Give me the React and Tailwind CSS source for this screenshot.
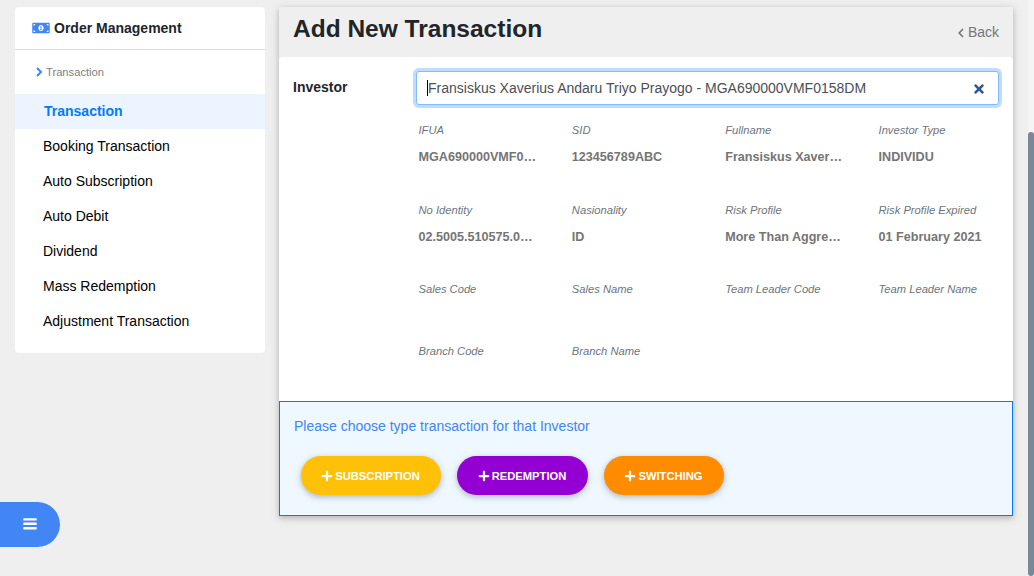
import React from "react";
import { FaMoneyBillAlt, FaTimes, FaPlus } from "react-icons/fa";

const menu = [
  "Booking Transaction",
  "Auto Subscription",
  "Auto Debit",
  "Dividend",
  "Mass Redemption",
  "Adjustment Transaction",
];

const details = [
  ["IFUA", "MGA690000VMF0…"],
  ["SID", "123456789ABC"],
  ["Fullname", "Fransiskus Xaver…"],
  ["Investor Type", "INDIVIDU"],
  ["No Identity", "02.5005.510575.0…"],
  ["Nasionality", "ID"],
  ["Risk Profile", "More Than Aggre…"],
  ["Risk Profile Expired", "01 February 2021"],
  ["Sales Code", ""],
  ["Sales Name", ""],
  ["Team Leader Code", ""],
  ["Team Leader Name", ""],
  ["Branch Code", ""],
  ["Branch Name", ""],
];

const actions = [
  { label: "SUBSCRIPTION", style: "w-[140px] bg-[#ffc107]" },
  { label: "REDEMPTION", style: "w-[131px] bg-[#9400d3]" },
  { label: "SWITCHING", style: "w-[120px] bg-[#ff8c00]" },
];

function ChevronRight() {
  return (
    <svg className="h-[10px] w-[7px] text-[#4285f4]" viewBox="0 0 7 10" fill="none" stroke="currentColor" strokeWidth="2">
      <path d="M1 1l4 4-4 4" />
    </svg>
  );
}

function ChevronLeft() {
  return (
    <svg className="mt-px h-[10px] w-[6px]" viewBox="0 0 6 10" fill="none" stroke="currentColor" strokeWidth="1.6">
      <path d="M5 1L1.2 5 5 9" />
    </svg>
  );
}

function Bars() {
  return (
    <svg className="h-[12px] w-[14px]" viewBox="0 0 14 12" fill="currentColor">
      <rect x="0.3" y="0.2" width="13.4" height="2.4" rx="0.5" />
      <rect x="0.3" y="4.6" width="13.4" height="2.4" rx="0.5" />
      <rect x="0.3" y="9" width="13.4" height="2.4" rx="0.5" />
    </svg>
  );
}

function Sidebar() {
  return (
    <aside className="h-[346px] w-[250px] shrink-0 overflow-hidden rounded bg-white">
      <div className="flex h-[43px] items-center gap-1 border-b border-[#dfdfdf] pl-[17px] font-bold text-[#212529]">
        <FaMoneyBillAlt className="h-[14px] w-[18px] text-[#4285f4]" />
        <span>Order Management</span>
      </div>
      <div className="flex h-11 items-center gap-[3px] pl-[21px] text-[11.2px] text-[#808080]">
        <ChevronRight />
        <span>Transaction</span>
      </div>
      <nav>
        <a className="flex h-[35px] items-center bg-[#ecf5ff] pl-[29px] font-bold text-[#007bff]">Transaction</a>
        {menu.map((m) => (
          <a key={m} className="flex h-[35px] items-center pl-7 text-black">{m}</a>
        ))}
      </nav>
    </aside>
  );
}

function InvestorForm() {
  return (
    <section className="flex h-[344px] rounded-t bg-white pl-3.5 pt-3.5">
      <label className="w-[123px] shrink-0 pt-1.5 font-bold text-[#212529]">Investor</label>
      <div>
        <div className="flex h-[34px] w-[583px] items-center justify-between rounded-[3px] border border-[#80bdff] bg-white pl-2.5 pr-3 text-[#495057] ring-3 ring-[#bfdeff]">
          <div className="flex items-center">
            <span className="h-4 w-px bg-black" />
            <span>Fransiskus Xaverius Andaru Triyo Prayogo - MGA690000VMF0158DM</span>
          </div>
          <FaTimes className="mt-px size-[14px] text-[#2f5597]" />
        </div>
        <dl className="ml-[2.5px] mt-[15px] grid w-[613.4px] grid-cols-4 grid-rows-[80px_79px_62px_40px]">
          {details.map(([label, value]) => (
            <div key={label}>
              <dt className="text-[11.2px] italic leading-5 text-[#6c757d]">{label}</dt>
              <dd className="mt-[7px] text-[12.6px] font-bold leading-5 text-[#757575]">{value}</dd>
            </div>
          ))}
        </dl>
      </div>
    </section>
  );
}

export default function App() {
  return (
    <div className="relative flex h-[576px] w-[1034px] overflow-hidden bg-[#efefef] font-['Liberation_Sans',Arial,sans-serif] text-[14px] leading-[21px]">
      <div className="flex gap-3.5 pl-[15px] pt-[7px]">
        <Sidebar />
        <main className="h-[509px] w-[734px] shadow-[0_2px_5px_rgba(0,0,0,0.16),0_2px_10px_rgba(0,0,0,0.12)]">
          <header className="flex h-[50px] items-center justify-between bg-[#efefef] px-3.5">
            <h1 className="-mt-[7px] text-[24.5px] font-bold leading-[30px] text-[#212529]">Add New Transaction</h1>
            <a className="flex items-center gap-1 text-[#757575]">
              <ChevronLeft />
              Back
            </a>
          </header>
          <InvestorForm />
          <section className="h-[115px] border border-[#007bff] bg-[#eff7ff] px-3.5 pt-3.5">
            <p className="text-[#4285f4]">Please choose type transaction for that Investor</p>
            <div className="ml-[7px] mt-[19px] flex gap-4">
              {actions.map(({ label, style }) => (
                <button
                  key={label}
                  className={`flex h-[39px] items-center justify-center gap-0.5 rounded-full pr-px pt-px text-[11.2px] font-bold text-white shadow-[0_2px_5px_rgba(0,0,0,0.16),0_2px_10px_rgba(0,0,0,0.12)] ${style}`}
                >
                  <FaPlus className="size-[12px]" />
                  {label}
                </button>
              ))}
            </div>
          </section>
        </main>
      </div>
      <button className="absolute left-0 top-[502px] flex h-[45px] w-[60px] items-center justify-center rounded-r-full bg-[#4285f4] pb-px text-white">
        <Bars />
      </button>
      <div className="absolute right-0 top-0 h-full w-1.5 bg-[#f5f5f5] pt-[132px]">
        <div className="h-full max-h-[444px] rounded-[3px] bg-[#778899]" />
      </div>
    </div>
  );
}
